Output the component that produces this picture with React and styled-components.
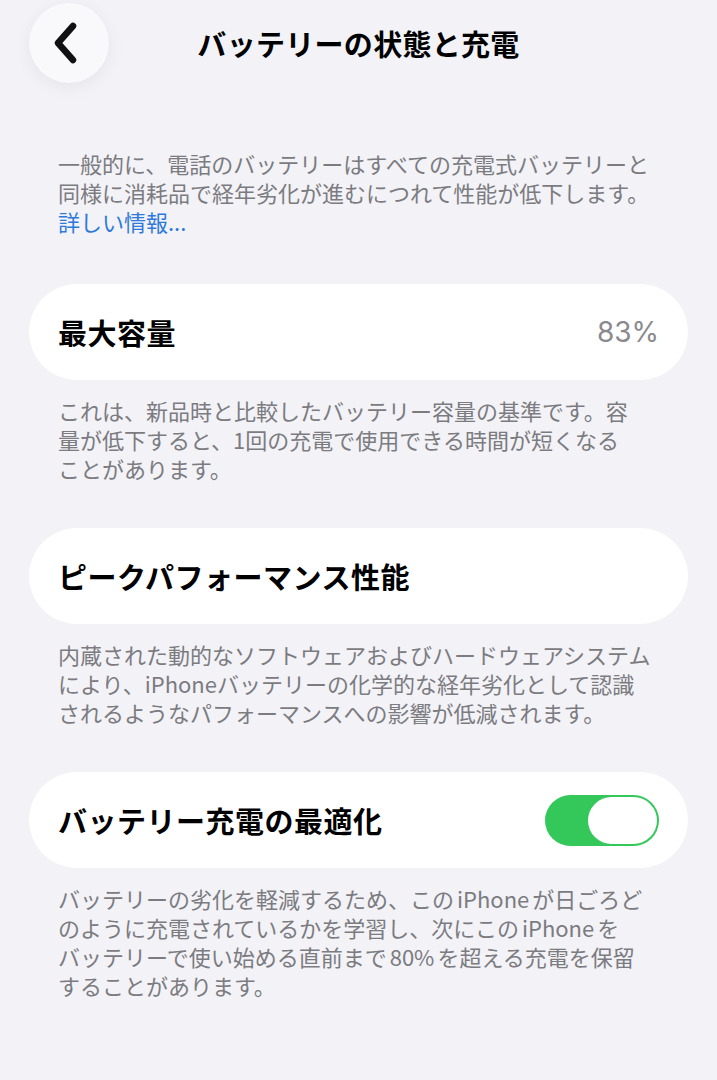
import React from 'react';
import styled, { createGlobalStyle } from 'styled-components';

const GlobalStyle = createGlobalStyle`
  html, body {
    margin: 0;
    padding: 0;
    background: #f2f2f7;
  }
  body {
    font-family: 'Noto Sans CJK JP', 'Noto Sans', sans-serif;
    -webkit-font-smoothing: antialiased;
  }
`;

const Page = styled.div`
  width: 717px;
  min-height: 1080px;
  box-sizing: border-box;
  padding: 3px 29px 40px;
  background: #f2f2f7;
`;

const Header = styled.header`
  display: grid;
  grid-template-columns: 80px 1fr 80px;
  align-items: center;
  height: 80px;
`;

const BackButton = styled.button`
  width: 80px;
  height: 80px;
  border-radius: 50%;
  border: none;
  padding: 0;
  background: #f9f9fb;
  box-shadow: 0 4px 18px rgba(0, 0, 0, 0.06);
  display: flex;
  align-items: center;
  justify-content: center;

  svg {
    margin-left: -6px;
  }
`;

const Title = styled.h1`
  margin: 0;
  text-align: center;
  font-size: 29px;
  font-weight: 700;
  color: #000;
  letter-spacing: 0.3px;
`;

const Footnote = styled.p`
  margin: ${p => p.$top || 16}px 0 0;
  padding: 0 29px;
  font-size: 22px;
  line-height: 29px;
  color: #7b7b80;
  font-weight: 400;
  white-space: nowrap;
`;

const Latin = styled.span`
  margin: 0 3px;
`;

const Link = styled.span`
  display: block;
  color: #2f7ad9;
`;

const Card = styled.div`
  margin-top: ${p => p.$top || 45}px;
  height: 96px;
  border-radius: 48px;
  background: #fff;
  display: flex;
  align-items: center;
  justify-content: space-between;
  padding: 0 29px;
`;

const Label = styled.span`
  font-size: 29px;
  font-weight: 700;
  color: #000;
  letter-spacing: 0.5px;
`;

const Value = styled.span`
  font-family: 'Inter', 'Noto Sans', sans-serif;
  font-size: 28px;
  color: #8a8a8e;
`;

const Toggle = styled.div`
  width: 114px;
  height: 51px;
  border-radius: 26px;
  background: #34c759;
  display: flex;
  align-items: center;
  justify-content: flex-end;
  padding: 0 2px;
  box-sizing: border-box;
`;

const Knob = styled.div`
  width: 69px;
  height: 47px;
  border-radius: 24px;
  background: #fff;
`;

const Chevron = () => (
  <svg width="28" height="44" viewBox="0 0 28 44">
    <path
      d="M21 5 L6 22 L21 39"
      fill="none"
      stroke="#111"
      strokeWidth="6.5"
      strokeLinecap="round"
      strokeLinejoin="round"
    />
  </svg>
);

export default function App() {
  return (
    <Page>
      <GlobalStyle />
      <Header>
        <BackButton aria-label="戻る">
          <Chevron />
        </BackButton>
        <Title>バッテリーの状態と充電</Title>
        <span />
      </Header>

      <Footnote $top={66}>
        一般的に、電話のバッテリーはすべての充電式バッテリーと
        <br />
        同様に消耗品で経年劣化が進むにつれて性能が低下します。
        <Link>詳しい情報...</Link>
      </Footnote>

      <Card $top={48}>
        <Label>最大容量</Label>
        <Value>83%</Value>
      </Card>
      <Footnote>
        これは、新品時と比較したバッテリー容量の基準です。容
        <br />
        量が低下すると、1回の充電で使用できる時間が短くなる
        <br />
        ことがあります。
      </Footnote>

      <Card>
        <Label>ピークパフォーマンス性能</Label>
      </Card>
      <Footnote>
        内蔵された動的なソフトウェアおよびハードウェアシステム
        <br />
        により、iPhoneバッテリーの化学的な経年劣化として認識
        <br />
        されるようなパフォーマンスへの影響が低減されます。
      </Footnote>

      <Card>
        <Label>バッテリー充電の最適化</Label>
        <Toggle>
          <Knob />
        </Toggle>
      </Card>
      <Footnote>
        バッテリーの劣化を軽減するため、この<Latin>iPhone</Latin>が日ごろど
        <br />
        のように充電されているかを学習し、次にこの<Latin>iPhone</Latin>を
        <br />
        バッテリーで使い始める直前まで<Latin>80%</Latin>を超える充電を保留
        <br />
        することがあります。
      </Footnote>
    </Page>
  );
}
